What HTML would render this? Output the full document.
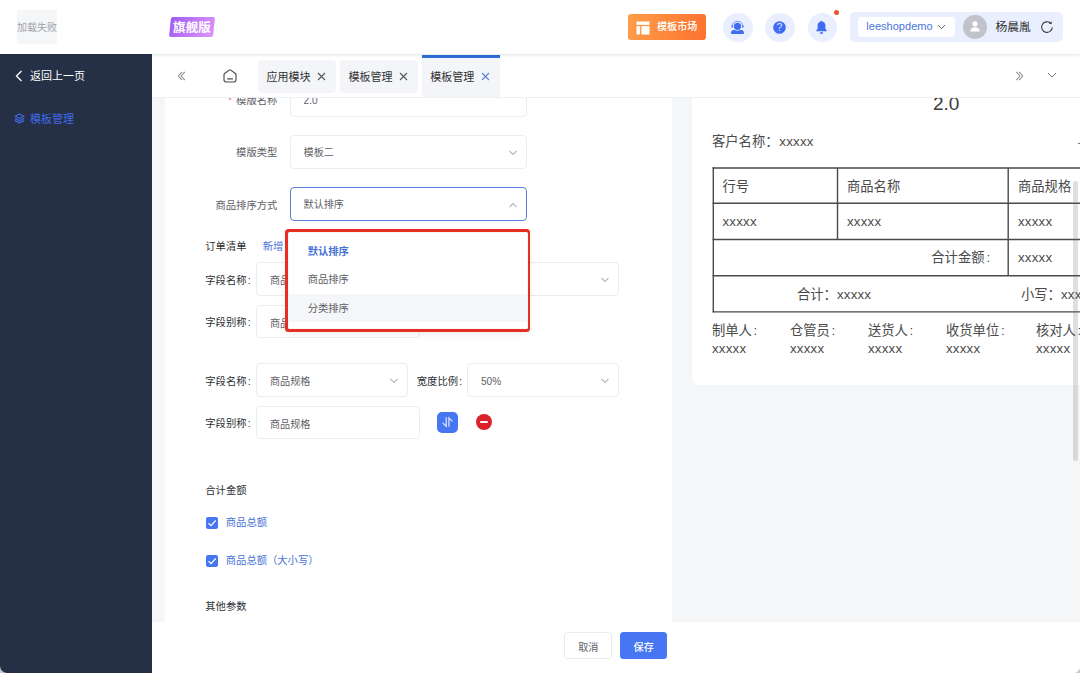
<!DOCTYPE html>
<html lang="zh-CN">
<head>
<meta charset="utf-8">
<title>模板管理</title>
<style>
*{box-sizing:border-box;margin:0;padding:0}
html,body{width:1080px;height:673px;overflow:hidden;background:#c9c9c9}
body{font-family:"Liberation Sans","Noto Sans CJK SC",sans-serif;font-size:11px;color:#303133;position:relative}
.abs{position:absolute}
.t{position:absolute;white-space:nowrap;line-height:1}
#win{position:absolute;left:0;top:0;width:1080px;height:673px;overflow:hidden;border-radius:0 0 7px 7px;background:#fff}

/* header */
#hdr{position:absolute;left:0;top:0;width:1080px;height:54px;background:#fff;box-shadow:0 1px 3px rgba(0,21,41,.12);z-index:30}
#logo{position:absolute;left:17px;top:10px;width:40px;height:34px;background:#f5f6f8;color:#a0a3a9;font-size:10px;line-height:36px;text-align:center;white-space:nowrap;overflow:hidden}
#badge{position:absolute;left:170px;top:17px;width:44px;height:20px;border-radius:2px;background:linear-gradient(115deg,#a059f6 0%,#c07af5 50%,#dc96f8 100%);transform:skewX(-6deg)}
#badge span{position:absolute;left:0;top:0;width:44px;height:20px;line-height:23.6px;text-align:center;color:#fff;font-weight:bold;font-size:12.5px;letter-spacing:.1px;transform:skewX(6deg)}
#market{position:absolute;left:628px;top:14px;width:78px;height:26px;border-radius:3px;background:linear-gradient(100deg,#ff9d48 0%,#fb7331 100%);color:#fff}
.cir{position:absolute;top:12.8px;width:29.5px;height:29.5px;border-radius:50%;background:#e9effe;margin-left:.2px}
#user{position:absolute;left:850px;top:12px;width:213px;height:30px;border-radius:5px;background:#e9effe}
#shop{position:absolute;left:8px;top:5px;width:97px;height:20px;border-radius:4px;background:#fff}

/* sidebar */
#side{position:absolute;left:0;top:54px;width:152px;height:619px;background:#252f46;z-index:20}

/* tabs */
#tabs{position:absolute;left:152px;top:54px;width:928px;height:44px;background:#fff;border-bottom:1px solid #eeeff2;z-index:25}
.tab{position:absolute;top:6px;height:33.4px;width:77.5px;border-radius:4px;background:#f4f5f8;color:#303133;font-size:11px}
.tab .t{left:8.3px;top:11.8px}
.tab.act{top:1.4px;height:42px;border-radius:0}
.tab.act .t{top:16.5px}
.tab.act i{position:absolute;left:0;top:0;width:100%;height:2.4px;background:#2f6fdc}

/* main */
#main{position:absolute;left:152px;top:98px;width:928px;height:524px;background:#f5f6f8;overflow:hidden;z-index:10}
#mc{position:absolute;left:-152px;top:-98px;width:1080px;height:673px}
.cb{position:absolute;width:12px;height:12px;border-radius:2px;background:#4676f2}
.cb svg{position:absolute;left:0;top:0}
#foot{position:absolute;left:152px;top:622px;width:928px;height:51px;background:#fff;z-index:15}

.lab{position:absolute;font-size:10.3px;color:#5d6066;line-height:1;white-space:nowrap;margin-top:1.2px;margin-left:-0.2px}
.lab.r{text-align:right;width:120px;margin-left:0.3px}
.inp{position:absolute;height:34px;border:1px solid #eaecf0;border-radius:4px;background:#fff;font-size:10.1px;color:#5d6066}
.inp .t{left:12.6px;top:12.3px}
.inp.g .t{top:13px}
.inp.g .arr{top:13.2px;right:8.8px}
.inp.foc{border-color:#5a82da}
.arr{position:absolute;right:8.3px;top:12.8px;width:10px;height:8px}
.b2{color:#2c2f33}
.co{font-style:normal;margin-left:1.2px}

/* dropdown */
#dd{position:absolute;left:285.2px;top:228.9px;width:245.3px;height:103.2px;border-radius:3.5px;background:#e72e22;z-index:40;box-shadow:0 2px 7px rgba(0,0,0,.07)}
#ddi{position:absolute;left:2.7px;top:2.7px;right:2.7px;bottom:2.7px;background:#fff;border-radius:1.5px;overflow:hidden;box-shadow:inset 0 0 2px rgba(0,0,0,.12)}
#dd .opt{position:absolute;left:0;width:240px;height:28.6px;font-size:10.3px;color:#5d6066}
#dd .opt .t{left:19.8px;top:10px}

/* preview */
.p14{font-size:13.3px;color:#4a4a4a}
.ln{position:absolute;background:#505050}
.x{letter-spacing:.22px}
</style>
</head>
<body>
<div id="win">

<!-- ============ HEADER ============ -->
<div id="hdr">
  <div id="logo">加载失败</div>
  <div id="badge"><span>旗舰版</span></div>
  <div id="market">
    <svg class="abs" style="left:7.5px;top:6.5px" width="14" height="14" viewBox="0 0 14 14"><rect x="0.5" y="0.5" width="13" height="3.4" fill="#fff"/><rect x="0.5" y="5.2" width="3.6" height="8.3" fill="#fff"/><rect x="5.4" y="5.2" width="8.1" height="8.3" fill="#fff"/></svg>
    <span class="t" style="left:29px;top:8.3px;font-size:10.1px;font-weight:500">模板市场</span>
  </div>
  <div class="cir" style="left:723px">
    <svg class="abs" style="left:7.2px;top:7px" width="15" height="15" viewBox="0 0 15 15"><path d="M1.1 14v-1.2c0-1.9 1.5-3.1 3.3-3.1h6.2c1.8 0 3.3 1.2 3.3 3.1V14z" fill="#3f6df2"/><circle cx="7.5" cy="6.3" r="4.5" fill="#e9effe"/><circle cx="7.5" cy="6.3" r="3.6" fill="#3f6df2"/><path d="M2.2 6.4C2.2 3.2 4.5 1.3 7.5 1.3s5.3 1.9 5.3 5.1" fill="none" stroke="#3f6df2" stroke-width=".7"/><rect x="1.5" y="5.3" width="1.3" height="2.5" rx=".6" fill="#3f6df2"/><rect x="12.2" y="5.3" width="1.3" height="2.5" rx=".6" fill="#3f6df2"/></svg>
  </div>
  <div class="cir" style="left:765px">
    <svg class="abs" style="left:8.2px;top:8.2px" width="13" height="13" viewBox="0 0 13 13"><circle cx="6.5" cy="6.5" r="6.3" fill="#3f6df2"/><text x="6.5" y="10.3" text-anchor="middle" font-family="Liberation Sans,sans-serif" font-size="10.5" fill="#dfe7fd">?</text></svg>
  </div>
  <div class="cir" style="left:807.4px;width:29.2px;height:29.2px">
    <svg class="abs" style="left:7.9px;top:7.3px" width="13" height="15" viewBox="0 0 13 15"><path d="M6.5 0.7c.5 0 .8.3.8.8 2 .4 3.1 2.1 3.1 4.1v3.1l1.3 1.8v.7H1.3v-.7l1.3-1.8V5.6c0-2 1.1-3.7 3.1-4.1 0-.5.3-.8.8-.8z" fill="#3f6df2"/><path d="M4.8 12.3h3.4a1.7 1.7 0 0 1-3.4 0z" fill="#3f6df2"/></svg>
  </div>
  <div class="abs" style="left:833.5px;top:9.8px;width:5.5px;height:5.5px;border-radius:50%;background:#f0502f"></div>
  <div id="user">
    <div id="shop">
      <span class="t" style="left:8.3px;top:3.8px;font-size:11.05px;color:#4b74d9">leeshopdemo</span>
      <svg class="abs" style="left:79.2px;top:7px" width="9" height="6" viewBox="0 0 9 6"><path d="M1 1l3.5 3.6L8 1" fill="none" stroke="#666" stroke-width="1"/></svg>
    </div>
    <div class="abs" style="left:113.4px;top:3px;width:23.6px;height:23.6px;border-radius:50%;background:#c0c3ca">
      <svg class="abs" style="left:5.5px;top:5px" width="12" height="13" viewBox="0 0 12 13"><circle cx="6" cy="3.8" r="2.6" fill="#fff"/><path d="M1.3 11.5c0-3 2-4.3 4.7-4.3s4.7 1.3 4.7 4.3z" fill="#fff"/></svg>
    </div>
    <span class="t" style="left:145.5px;top:10.3px;font-size:11.8px;color:#333">杨晨胤</span>
    <svg class="abs" style="left:190.3px;top:7.8px" width="14" height="14" viewBox="0 0 14 14"><path d="M12.3 7.4a5.3 5.3 0 1 1-1.9-4.4" fill="none" stroke="#3a3a3a" stroke-width="1.05"/><path d="M11.6 1.3v2.800H8.8z" fill="#3a3a3a"/></svg>
  </div>
</div>

<!-- ============ SIDEBAR ============ -->
<div id="side">
  <svg class="abs" style="left:15px;top:15.7px" width="8" height="12" viewBox="0 0 8 12"><path d="M6.5 1L1.5 6l5 5" fill="none" stroke="#fff" stroke-width="1.3"/></svg>
  <span class="t" style="left:30px;top:16.8px;font-size:11px;color:#fff">返回上一页</span>
  <svg class="abs" style="left:14.1px;top:58.6px" width="11" height="11" viewBox="0 0 11 11"><path d="M5.5 1L9.9 3.2 5.5 5.4 1.1 3.2z" fill="none" stroke="#4169e8" stroke-width="1.1" stroke-linejoin="round"/><path d="M0.8 5.4L5.5 7.7l4.7-2.3" fill="none" stroke="#4169e8" stroke-width="1.2"/><path d="M0.8 7.6L5.5 9.9l4.7-2.3" fill="none" stroke="#4169e8" stroke-width="1.2"/></svg>
  <span class="t" style="left:30px;top:59.6px;font-size:11px;color:#4169e8">模板管理</span>
</div>

<!-- ============ TABS ============ -->
<div id="tabs">
  <svg class="abs" style="left:25px;top:17px" width="10" height="10" viewBox="0 0 10 10"><path d="M5 0.8L1.4 5l3.6 4.2M7.8 0.8L4.2 5l3.6 4.2" fill="none" stroke="#8a8d93" stroke-width="1.1"/></svg>
  <svg class="abs" style="left:71.3px;top:14.8px" width="14" height="14" viewBox="0 0 14 14"><path d="M1 5.7Q1 5 1.6 4.5L6.2 1.1Q7 .5 7.8 1.1L12.4 4.5Q13 5 13 5.7V10.8Q13 13 10.8 13H3.2Q1 13 1 10.8z" fill="none" stroke="#4a4a4a" stroke-width="1.15" stroke-linejoin="round"/><path d="M4.7 9.9h4.8" stroke="#4a4a4a" stroke-width="1.15" stroke-linecap="round"/></svg>
  <div class="tab" style="left:106.2px"><span class="t">应用模块</span><svg class="abs" style="left:59.3px;top:12px" width="9" height="9" viewBox="0 0 9 9"><path d="M1 1l7 7M8 1L1 8" stroke="#555" stroke-width="1.1" fill="none"/></svg></div>
  <div class="tab" style="left:188.2px"><span class="t">模板管理</span><svg class="abs" style="left:59.3px;top:12px" width="9" height="9" viewBox="0 0 9 9"><path d="M1 1l7 7M8 1L1 8" stroke="#555" stroke-width="1.1" fill="none"/></svg></div>
  <div class="tab act" style="left:270px"><i></i><span class="t">模板管理</span><svg class="abs" style="left:59.3px;top:16.6px" width="9" height="9" viewBox="0 0 9 9"><path d="M1 1l7 7M8 1L1 8" stroke="#5a7fe0" stroke-width="1.1" fill="none"/></svg></div>
  <svg class="abs" style="left:862.5px;top:16.5px" width="10" height="10" viewBox="0 0 10 10"><path d="M1.3 0.8L4.9 5 1.3 9.2M4.1 0.8L7.7 5 4.1 9.2" fill="none" stroke="#8d9095" stroke-width="1.05"/></svg>
  <svg class="abs" style="left:895.2px;top:17.6px" width="10" height="7" viewBox="0 0 10 7"><path d="M1 1l4 4.2L9 1" fill="none" stroke="#707070" stroke-width="1"/></svg>
</div>

<!-- ============ MAIN ============ -->
<div id="main">

  <div id="mc">
    <div class="abs" style="left:165px;top:98px;width:507px;height:524px;background:#fff"></div>
    <!-- rows -->
    <span class="lab r" style="left:157px;top:94.5px"><i style="color:#f25555;font-style:normal;margin-right:4px">*</i>模版名称</span>
    <div class="inp" style="left:290px;top:82.5px;width:236.8px"><span class="t">2.0</span></div>
    <span class="lab r" style="left:157px;top:147px">模版类型</span>
    <div class="inp" style="left:290px;top:135px;width:236.8px"><span class="t">模板二</span><svg class="arr" viewBox="0 0 10 8"><path d="M1.5 2l3.5 3.5L8.5 2" fill="none" stroke="#b3b6bd" stroke-width="1.1"/></svg></div>
    <span class="lab r" style="left:157px;top:199.5px">商品排序方式</span>
    <div class="inp foc" style="left:290px;top:187px;width:236.8px"><span class="t">默认排序</span><svg class="arr" viewBox="0 0 10 8"><path d="M1.5 6l3.5-3.5L8.5 6" fill="none" stroke="#b3b6bd" stroke-width="1.1"/></svg></div>

    <span class="lab b2" style="left:205.5px;top:241px">订单清单</span>
    <span class="lab" style="left:263px;top:241px;color:#4672d8">新增</span>
    
    <span class="lab b2" style="left:205.5px;top:274.5px">字段名称<i class="co">:</i></span>
    <div class="inp g" style="left:256.4px;top:262px;width:152px"><span class="t">商品名称</span><svg class="arr" viewBox="0 0 10 8"><path d="M1.5 2l3.5 3.5L8.5 2" fill="none" stroke="#b3b6bd" stroke-width="1.1"/></svg></div>
    <span class="lab b2" style="left:417px;top:274.5px">宽度比例<i class="co">:</i></span>
    <div class="inp g" style="left:467.4px;top:262px;width:152px"><span class="t">50%</span><svg class="arr" viewBox="0 0 10 8"><path d="M1.5 2l3.5 3.5L8.5 2" fill="none" stroke="#b3b6bd" stroke-width="1.1"/></svg></div>
    <span class="lab b2" style="left:205.5px;top:316.5px">字段别称<i class="co">:</i></span>
    <div class="inp g" style="left:256.4px;top:305px;width:163.5px;height:33px"><span class="t">商品名称</span></div>
    <div class="abs" style="left:437px;top:310.5px;width:21px;height:21px;border-radius:5px;background:#4676f2">
      <svg class="abs" style="left:4px;top:4.5px" width="13" height="12" viewBox="0 0 13 12"><path d="M5.2 1.3v9L1.7 6.8M7.9 10.8V1.8l3.500 3.500" fill="none" stroke="#e6eeff" stroke-width="1.15" stroke-linejoin="miter"/></svg>
    </div>
    <div class="abs" style="left:476px;top:313px;width:16px;height:16px;border-radius:50%;background:#dc2129">
      <div class="abs" style="left:3.7px;top:7.1px;width:8.6px;height:2.1px;border-radius:1px;background:#fff"></div>
    </div>
    
    <span class="lab b2" style="left:205.5px;top:375.5px">字段名称<i class="co">:</i></span>
    <div class="inp g" style="left:256.4px;top:363px;width:152px"><span class="t">商品规格</span><svg class="arr" viewBox="0 0 10 8"><path d="M1.5 2l3.5 3.5L8.5 2" fill="none" stroke="#b3b6bd" stroke-width="1.1"/></svg></div>
    <span class="lab b2" style="left:417px;top:375.5px">宽度比例<i class="co">:</i></span>
    <div class="inp g" style="left:467.4px;top:363px;width:152px"><span class="t">50%</span><svg class="arr" viewBox="0 0 10 8"><path d="M1.5 2l3.5 3.5L8.5 2" fill="none" stroke="#b3b6bd" stroke-width="1.1"/></svg></div>
    <span class="lab b2" style="left:205.5px;top:417.5px">字段别称<i class="co">:</i></span>
    <div class="inp g" style="left:256.4px;top:406px;width:163.5px;height:33px"><span class="t">商品规格</span></div>
    <div class="abs" style="left:437px;top:411.5px;width:21px;height:21px;border-radius:5px;background:#4676f2">
      <svg class="abs" style="left:4px;top:4.5px" width="13" height="12" viewBox="0 0 13 12"><path d="M5.2 1.3v9L1.7 6.8M7.9 10.8V1.8l3.500 3.500" fill="none" stroke="#e6eeff" stroke-width="1.15" stroke-linejoin="miter"/></svg>
    </div>
    <div class="abs" style="left:476px;top:414px;width:16px;height:16px;border-radius:50%;background:#dc2129">
      <div class="abs" style="left:3.7px;top:7.1px;width:8.6px;height:2.1px;border-radius:1px;background:#fff"></div>
    </div>

    <span class="lab b2" style="left:205.5px;top:485px">合计金额</span>
    <div class="cb" style="left:206px;top:516.5px"><svg width="12" height="12" viewBox="0 0 12 12"><path d="M2.5 6.1l2.5 2.6 4.7-5.2" fill="none" stroke="#fff" stroke-width="1.2"/></svg></div>
    <span class="lab" style="left:226px;top:517px;color:#4672d8">商品总额</span>
    <div class="cb" style="left:206px;top:554.8px"><svg width="12" height="12" viewBox="0 0 12 12"><path d="M2.5 6.1l2.5 2.6 4.7-5.2" fill="none" stroke="#fff" stroke-width="1.2"/></svg></div>
    <span class="lab" style="left:226px;top:555.3px;color:#4672d8">商品总额（大小写）</span>
    <span class="lab b2" style="left:205.5px;top:600.5px">其他参数</span>

    <!-- preview card -->
    <div class="abs" style="left:692px;top:98px;width:520px;height:286.5px;background:#fff;border-radius:0 0 0 8px"></div>
    <span class="t" style="left:933px;top:94px;font-size:19px;color:#3c3c3c">2.0</span>
    <span class="t p14" style="left:712px;top:135px">客户名称：<span class="x" style="margin-left:.8px">xxxxx</span></span>
    <div class="abs" style="left:1077.5px;top:143.2px;width:3px;height:1.2px;background:#777"></div>
    <!-- table lines -->
    <svg class="abs" style="left:700px;top:160px" width="380" height="160" viewBox="700 160 380 160"><g stroke="#4a4a4a" stroke-width="1.4" fill="none"><path d="M712.6 168.0H1100"/><path d="M712.6 203.3H1100"/><path d="M712.6 239.5H1100"/><path d="M712.6 275.7H1100"/><path d="M712.6 311.9H1100"/><path d="M713.3 167.3V312.2"/><path d="M837.5 168.0V239.3"/><path d="M1008.2 168.0V275.7"/></g></svg>
    <span class="t p14" style="left:722.5px;top:180px">行号</span>
    <span class="t p14" style="left:847px;top:180px">商品名称</span>
    <span class="t p14" style="left:1018px;top:180px">商品规格</span>
    <span class="t p14" style="left:722.5px;top:215px"><span class="x">xxxxx</span></span>
    <span class="t p14" style="left:847px;top:215px"><span class="x">xxxxx</span></span>
    <span class="t p14" style="left:1018px;top:215px"><span class="x">xxxxx</span></span>
    <span class="t p14" style="left:931.3px;top:251px">合计金额<i class="co" style="margin-left:1.9px">:</i></span>
    <span class="t p14" style="left:1018px;top:251px"><span class="x">xxxxx</span></span>
    <span class="t p14" style="left:797px;top:287.5px">合计：<span class="x">xxxxx</span></span>
    <span class="t p14" style="left:1021px;top:287.5px">小写：<span class="x">xxxxx</span></span>
    <span class="t p14" style="left:712px;top:323.5px">制单人<i class="co" style="margin-left:1.7px">:</i></span>
    <span class="t p14" style="left:790px;top:323.5px">仓管员<i class="co" style="margin-left:1.7px">:</i></span>
    <span class="t p14" style="left:868px;top:323.5px">送货人<i class="co" style="margin-left:1.7px">:</i></span>
    <span class="t p14" style="left:946px;top:323.5px">收货单位<i class="co" style="margin-left:1.7px">:</i></span>
    <span class="t p14" style="left:1036px;top:323.5px">核对人<i class="co" style="margin-left:1.7px">:</i></span>
    <span class="t p14" style="left:712px;top:342px"><span class="x">xxxxx</span></span>
    <span class="t p14" style="left:790px;top:342px"><span class="x">xxxxx</span></span>
    <span class="t p14" style="left:868px;top:342px"><span class="x">xxxxx</span></span>
    <span class="t p14" style="left:946px;top:342px"><span class="x">xxxxx</span></span>
    <span class="t p14" style="left:1036px;top:342px"><span class="x">xxxxx</span></span>
    <!-- scrollbar -->
    <div class="abs" style="left:1073px;top:181px;width:5.3px;height:280px;border-radius:3px;background:rgba(110,110,115,.22)"></div>
  </div>
</div>

<div id="foot">
  <div class="abs" style="left:412.4px;top:10.4px;width:47.4px;height:27px;border:1px solid #e8eaee;border-radius:3.5px;background:#fff"><span class="t" style="left:12.8px;top:9.4px;font-size:10.1px;color:#5d6066">取消</span></div>
  <div class="abs" style="left:468px;top:10.4px;width:47.2px;height:27px;border-radius:3.5px;background:#4676f2"><span class="t" style="left:13.6px;top:10.2px;font-size:10.1px;color:#fff;font-weight:500">保存</span></div>
</div>

<div id="dd"><div id="ddi">
  <div class="opt" style="top:5.2px"><span class="t" style="color:#4672d8;font-weight:bold">默认排序</span></div>
  <div class="opt" style="top:33.8px"><span class="t">商品排序</span></div>
  <div class="opt" style="top:62.2px;background:#f5f6f8"><span class="t">分类排序</span></div>
</div></div>

</div>
</body>
</html>
